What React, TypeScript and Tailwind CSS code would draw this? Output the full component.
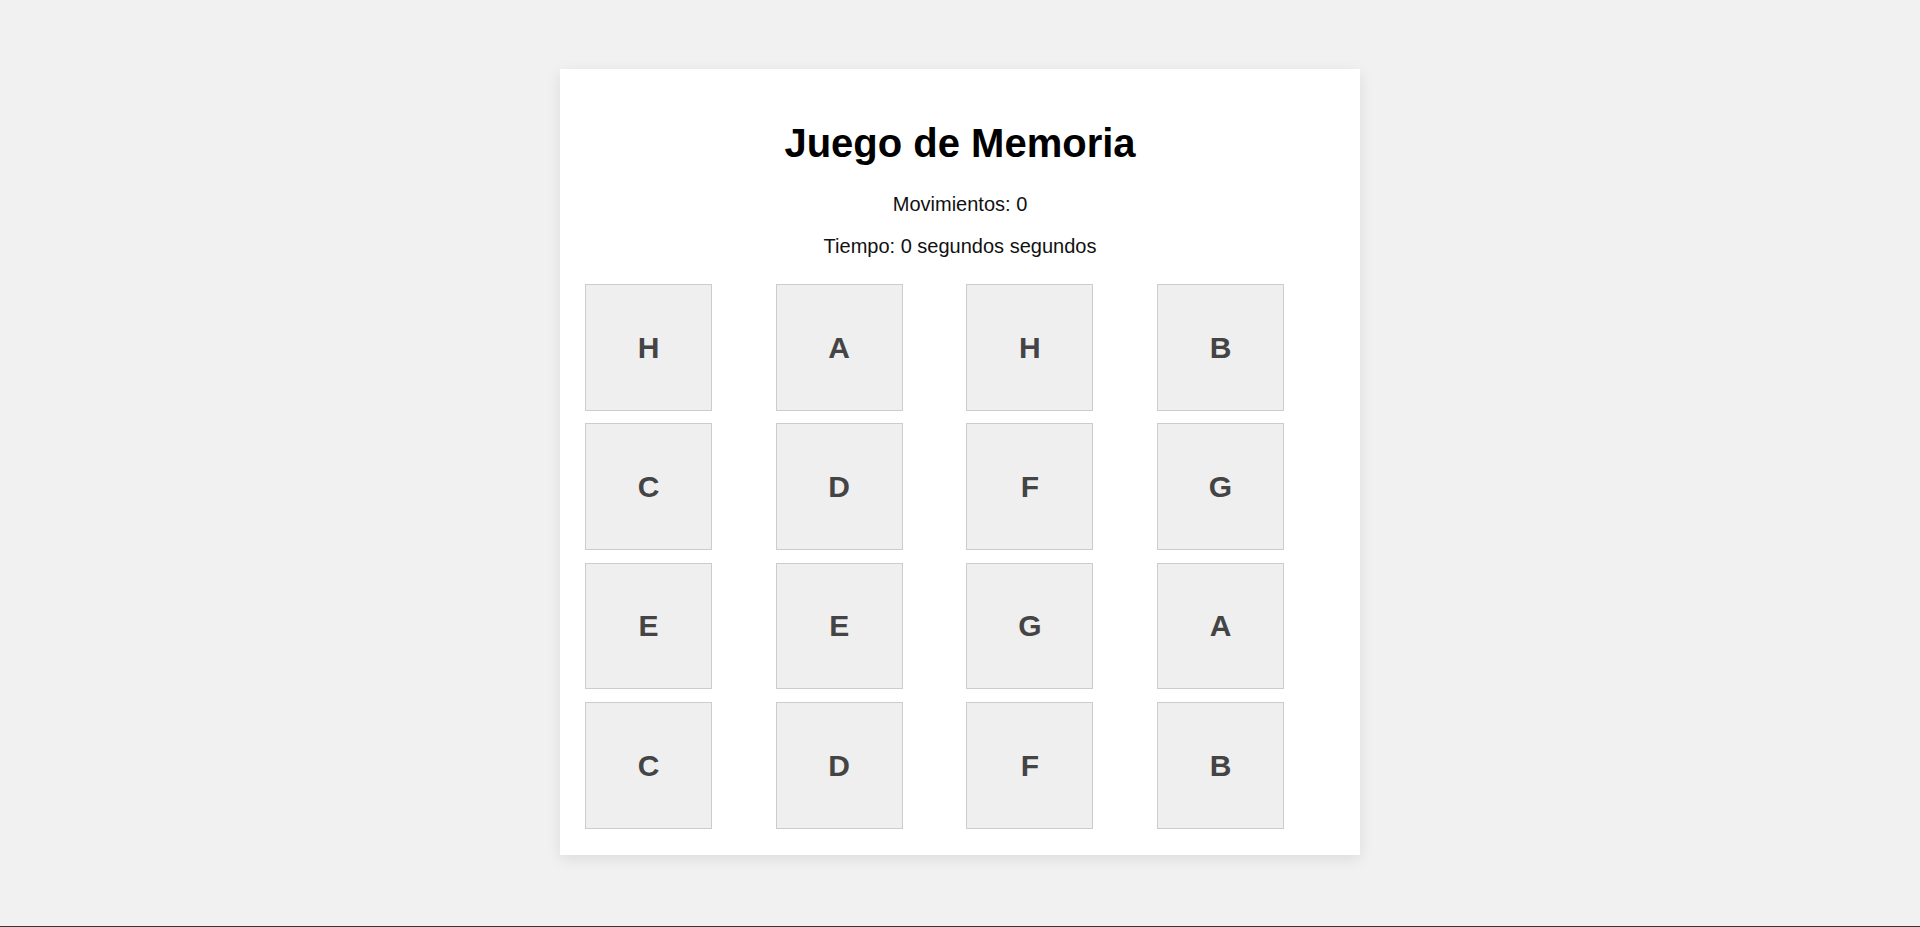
import React, { useState } from "react";

const initialCards = ["H", "A", "H", "B", "C", "D", "F", "G", "E", "E", "G", "A", "C", "D", "F", "B"];

const App: React.FC = () => {
  const [cards] = useState<string[]>(initialCards);
  const [moves] = useState(0);
  const [seconds] = useState(0);

  return (
    <div className="h-screen flex flex-col bg-[#f1f1f1] font-['Liberation_Sans',Arial,sans-serif]">
      <div className="flex-1 flex justify-center pt-[69px]">
        <div className="w-[800px] h-[786px] bg-white p-[25px] shadow-[0_4px_14px_rgba(0,0,0,0.09)]">
          <h1 className="mt-[26px] mb-[26.5px] text-center text-[40px] leading-[46px] font-bold text-black">
            Juego de Memoria
          </h1>
          <p className="text-center text-[20px] leading-[23px] text-[#111]">Movimientos: {moves}</p>
          <p className="mt-[19.5px] text-center text-[20px] leading-[23px] text-[#111]">
            Tiempo: {seconds} segundos segundos
          </p>
          <div className="mt-[26px] grid grid-cols-[repeat(4,127px)] gap-x-[63.67px] gap-y-[12.67px]">
            {cards.map((card, i) => (
              <div
                key={i}
                className="w-[127px] h-[126.67px] flex items-center justify-center bg-[#efefef] border border-[#cccccc] text-[30px] font-bold text-[#444]"
              >
                {card}
              </div>
            ))}
          </div>
        </div>
      </div>
      <div className="h-px bg-[#3c3533]" />
    </div>
  );
};

export default App;
